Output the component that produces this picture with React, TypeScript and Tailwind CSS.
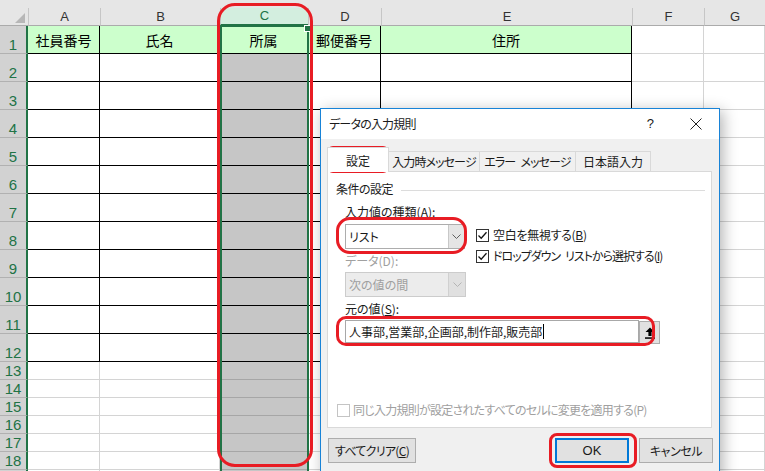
import React from 'react';

const letters = ['A', 'B', 'C', 'D', 'E', 'F', 'G'];
const titles = ['社員番号', '氏名', '所属', '郵便番号', '住所'];
const rows = Array.from({ length: 19 }, (_, i) => i + 1);

function HeaderCell({ c }: { c: number }) {
  const sel = c === 2;
  return (
    <div className="bg-[#e6e6e6] flex flex-col">
      <div
        className={
          sel
            ? 'mt-[8px] h-[18px] bg-[#d3eedf] border-l border-[#c6c6c6] border-b-2 border-b-[#217346] flex items-center justify-center text-[#217346]'
            : 'mt-[8px] h-[18px] border-l border-[#c6c6c6] border-b border-b-[#ababab] flex items-center justify-center text-[#333]'
        }
      >
        {letters[c]}
      </div>
    </div>
  );
}

function Cell({ r, c }: { r: number; c: number }) {
  const inTable = r <= 12 && c <= 4;
  const isC = c === 2;
  let bg = 'bg-white';
  if (r === 1 && c <= 4) bg = 'bg-[#ccffcc]';
  else if (isC) bg = 'bg-[#c6c6c6]';
  const br = inTable ? 'border-r-black' : 'border-r-[#d4d4d4]';
  const bb = inTable ? 'border-b-black' : isC ? 'border-b-[#a6a6a6]' : 'border-b-[#d4d4d4]';
  return (
    <div className={`${bg} ${br} ${bb} border-r border-b flex items-center justify-center pt-[2px] text-[14px] text-black`}>
      {r === 1 && c <= 4 ? titles[c] : null}
    </div>
  );
}

function Sheet() {
  return (
    <div className="grid grid-cols-[28px_72px_120px_88px_73px_251px_72px_61px] grid-rows-[26px_repeat(12,28px)_repeat(7,18px)] font-['Noto_Sans_CJK_JP',sans-serif]">
      <div className="bg-[#e6e6e6] relative border-b border-[#ababab]">
        <svg className="absolute left-[15px] top-[13px]" width="10" height="10" viewBox="0 0 10 10">
          <path d="M10 0 L10 10 L0 10 Z" fill="#b7b7b7" />
        </svg>
      </div>
      {letters.map((_, c) => (
        <div key={c} className="font-['Liberation_Sans',sans-serif] text-[13px] contents">
          <HeaderCell c={c} />
        </div>
      ))}
      {rows.map((r) => (
        <React.Fragment key={r}>
          <div className="bg-[#d2d2d2] border-b border-[#b1b1b1] border-r-2 border-r-[#217346] flex items-end justify-center pb-[1px] font-['Liberation_Sans',sans-serif] text-[15px] leading-none text-[#217346]">
            {r < 19 ? r : null}
          </div>
          {letters.map((_, c) => (
            <Cell key={c} r={r} c={c} />
          ))}
        </React.Fragment>
      ))}
    </div>
  );
}

function Chevron({ color }: { color: string }) {
  return (
    <svg width="9" height="5" viewBox="0 0 9 5">
      <path d="M0.5 0.5 L4.5 4.5 L8.5 0.5" fill="none" stroke={color} strokeWidth="1" />
    </svg>
  );
}

function Check({ checked, disabled }: { checked?: boolean; disabled?: boolean }) {
  return (
    <div
      className={
        disabled
          ? 'w-[13px] h-[13px] border border-[#c4c4c4] bg-white shrink-0'
          : 'w-[13px] h-[13px] border border-[#333] bg-white shrink-0 flex items-center justify-center'
      }
    >
      {checked && (
        <svg width="11" height="11" viewBox="0 0 11 11">
          <path d="M1.5 5.5 L4.2 8.2 L9.5 2.2" fill="none" stroke="#111" strokeWidth="1.3" />
        </svg>
      )}
    </div>
  );
}

function Dialog() {
  return (
    <div className="absolute left-[320px] top-[108px] w-[400px] h-[380px] border border-[#1883d7] bg-[#f0f0f0] shadow-[3px_3px_14px_rgba(0,0,0,0.3)] flex flex-col text-[12px] text-[#1a1a1a] whitespace-nowrap font-['Noto_Sans_CJK_JP',sans-serif] [font-feature-settings:'palt']">
      <div className="h-[30px] shrink-0 bg-white flex items-center pl-[8px]">
        <span className="tracking-[-0.8px]">データの入力規則</span>
        <span className="ml-auto text-[13px] font-['Liberation_Sans',sans-serif]">?</span>
        <svg className="ml-[36px] mr-[17px]" width="12" height="12" viewBox="0 0 12 12">
          <path d="M0.5 0.5 L11.5 11.5 M11.5 0.5 L0.5 11.5" stroke="#222" strokeWidth="1" />
        </svg>
      </div>
      <div className="pl-[6px] pt-[8px] flex flex-col">
        <div className="flex items-end h-[25px] -mb-px relative z-10">
          <div className="h-[25px] w-[62px] bg-white border border-[#d9d9d9] border-b-0 flex items-center justify-center pt-[1px]">
            設定
          </div>
          <div className="h-[20px] w-[92px] -ml-px mb-px border border-[#d9d9d9] border-b-0 flex items-center justify-center tracking-[-0.9px]">
            入力時メッセージ
          </div>
          <div className="h-[20px] w-[97px] -ml-px mb-px border border-[#d9d9d9] border-b-0 flex items-center justify-center tracking-[-0.9px]">
            エラー{'\u2002'}メッセージ
          </div>
          <div className="h-[20px] w-[76px] -ml-px mb-px border border-[#d9d9d9] border-b-0 flex items-center justify-center">
            日本語入力
          </div>
        </div>
        <div className="w-[385px] h-[257px] bg-white border border-[#d9d9d9] flex flex-col leading-[16px]">
          <div className="flex items-center pl-[8px] pr-[6px] pt-[9px]">
            <span className="tracking-[-0.5px]">条件の設定</span>
            <div className="flex-1 h-px bg-[#dcdcdc] ml-[8px] mt-[2px]" />
          </div>
          <div className="pl-[17px] flex flex-col">
            <div className="mt-[7px]">
              入力値の種類(<span className="underline">A</span>):
            </div>
            <div className="flex mt-[4px]">
              <div className="flex flex-col w-[121px]">
                <div className="h-[25px] w-[120px] border border-[#adadad] bg-white flex">
                  <div className="flex-1 flex items-center pl-[3px]">リスト</div>
                  <div className="w-[16px] bg-[#e5e5e5] border-l border-[#c8c8c8] flex items-center justify-center">
                    <Chevron color="#606060" />
                  </div>
                </div>
                <div className="mt-[4px] text-[#a0a0a0]">データ(D):</div>
                <div className="mt-[3px] h-[25px] w-[121px] border border-[#cccccc] bg-[#ececec] flex text-[#a0a0a0]">
                  <div className="flex-1 flex items-center pl-[3px]">次の値の間</div>
                  <div className="w-[17px] bg-[#e0e0e0] border-l border-[#d0d0d0] flex items-center justify-center">
                    <Chevron color="#b4b4b4" />
                  </div>
                </div>
              </div>
              <div className="flex flex-col ml-[10px]">
                <div className="flex items-center h-[16px] mt-[3px] gap-[4px]">
                  <Check checked />
                  <span className="tracking-[-0.3px]">
                    空白を無視する(<span className="underline">B</span>)
                  </span>
                </div>
                <div className="flex items-center h-[16px] mt-[5px] gap-[4px]">
                  <Check checked />
                  <span className="tracking-[-1px]">
                    ドロップダウン{'\u2002'}リストから選択する(<span className="underline">I</span>)
                  </span>
                </div>
              </div>
            </div>
            <div className="mt-[4px]">
              元の値(<span className="underline">S</span>):
            </div>
            <div className="flex mt-[3px]">
              <div className="h-[23px] w-[294px] border border-[#a8a8a8] bg-white flex items-center pl-[3px]">
                <span>人事部,営業部,企画部,制作部,販売部</span>
                <span className="w-px h-[15px] bg-black ml-px" />
              </div>
              <div className="h-[23px] w-[21px] mt-px border border-[#adadad] bg-[#e1e1e1] flex items-center justify-center">
                <svg width="10" height="12" viewBox="0 0 10 12">
                  <path d="M5 0.5 L9.5 5 L6.6 5 L6.6 9 L3.4 9 L3.4 5 L0.5 5 Z" fill="#000" />
                  <rect x="0" y="10.3" width="10" height="1.5" fill="#000" />
                </svg>
              </div>
            </div>
          </div>
          <div className="mt-auto mb-[9px] pl-[9px] flex items-center h-[16px] gap-[3px] text-[#a0a0a0]">
            <Check disabled />
            <span className="tracking-[-0.75px]">同じ入力規則が設定されたすべてのセルに変更を適用する(P)</span>
          </div>
        </div>
        <div className="flex w-[386px] mt-[10px]">
          <div className="ml-px h-[25px] w-[88px] border border-[#adadad] bg-[#e1e1e1] flex items-center justify-center">
            <span className="tracking-[-0.7px]">
              すべてクリア(<span className="underline">C</span>)
            </span>
          </div>
          <div className="ml-auto h-[25px] w-[74px] border-2 border-[#0078d7] bg-[#e1e1e1] flex items-center justify-center font-['Liberation_Sans',sans-serif] text-[13px]">
            OK
          </div>
          <div className="ml-[10px] h-[25px] w-[74px] border border-[#adadad] bg-[#e1e1e1] flex items-center justify-center tracking-[-0.4px]">
            キャンセル
          </div>
        </div>
      </div>
    </div>
  );
}

export default function App() {
  return (
    <div className="relative w-[765px] h-[471px] overflow-hidden bg-white">
      <Sheet />
      {/* column selection frame */}
      <div className="absolute left-[220px] top-[25px] w-[89px] h-[450px] border-2 border-b-0 border-[#217346]" />
      <div className="absolute left-[304px] top-[25px] w-[7px] h-[7px] bg-[#217346] border border-white" />
      <Dialog />
      {/* red annotations */}
      <div className="pointer-events-none absolute left-[217px] top-[3px] w-[96px] h-[464px] rounded-[18px] border-[3px] border-[#e81c24]" />
      <div className="pointer-events-none absolute left-[327px] top-[146px] w-[62px] h-[27px] rounded-[6px] border-[3px] border-[#e81c24]" />
      <div className="pointer-events-none absolute left-[336px] top-[217px] w-[131px] h-[37px] rounded-[14px] border-[3px] border-[#e81c24]" />
      <div className="pointer-events-none absolute left-[336px] top-[316px] w-[319px] h-[30px] rounded-[10px] border-[3px] border-[#e81c24]" />
      <div className="pointer-events-none absolute left-[549px] top-[433px] w-[88px] h-[35px] rounded-[8px] border-[3px] border-[#e81c24]" />
    </div>
  );
}
